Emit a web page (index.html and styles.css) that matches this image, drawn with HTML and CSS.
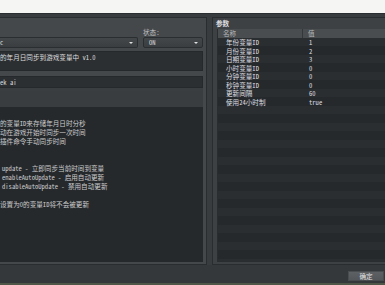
FILE: index.html
```html
<!DOCTYPE html>
<html lang="zh">
<head>
    <meta charset="UTF-8">
    <meta name="viewport" content="width=device-width, initial-scale=1.0">
    <title>插件设置</title>
    <link rel="stylesheet" href="styles.css">
</head>
<body>
<div class="screen">
    <div class="top-strip"></div>

    <div class="dialog">
        <div class="panels">

            <!-- general settings -->
            <section class="group general">
                <div class="label-row">
                    <span class="status-label">状态:</span>
                </div>
                <div class="select-row">
                    <div class="select name-select"><span>c</span><i class="arrow"></i></div>
                    <div class="select status-select"><span>ON</span><i class="arrow"></i></div>
                </div>
                <div class="box desc">的年月日同步到游戏变量中 v1.0</div>
                <div class="box author">ek ai</div>
                <div class="spacer"></div>
                <div class="box help">
                    <p>的变量ID来存储年月日时分秒</p>
                    <p>动在游戏开始时同步一次时间</p>
                    <p>插件命令手动同步时间</p>
                    <p>&nbsp;</p>
                    <p>&nbsp;</p>
                    <p class="cmd">update - 立即同步当前时间到变量</p>
                    <p class="cmd">enableAutoUpdate - 启用自动更新</p>
                    <p class="cmd">disableAutoUpdate - 禁用自动更新</p>
                    <p>&nbsp;</p>
                    <p>设置为0的变量ID将不会被更新</p>
                </div>
            </section>

            <!-- parameters -->
            <section class="group params">
                <div class="group-title">参数</div>
                <div class="table">
                    <div class="thead">
                        <span class="col-name">名称</span>
                        <span class="col-val">值</span>
                    </div>
                    <div class="tbody">
                        <div class="row"><span class="col-name">年份变量ID</span><span class="col-val">1</span></div>
                        <div class="row"><span class="col-name">月份变量ID</span><span class="col-val">2</span></div>
                        <div class="row"><span class="col-name">日期变量ID</span><span class="col-val">3</span></div>
                        <div class="row"><span class="col-name">小时变量ID</span><span class="col-val">0</span></div>
                        <div class="row"><span class="col-name">分钟变量ID</span><span class="col-val">0</span></div>
                        <div class="row"><span class="col-name">秒钟变量ID</span><span class="col-val">0</span></div>
                        <div class="row"><span class="col-name">更新间隔</span><span class="col-val">60</span></div>
                        <div class="row"><span class="col-name">使用24小时制</span><span class="col-val">true</span></div>
                    </div>
                </div>
            </section>

        </div>

        <div class="footer">
            <button class="ok-btn">确定</button>
        </div>
    </div>

    <div class="bottom-strip"></div>
</div>
</body>
</html>
```

FILE: styles.css
```css
* {
    margin: 0;
    padding: 0;
    box-sizing: border-box;
}

body {
    background: #35383b;
    font-family: "Noto Sans Mono CJK SC", "Noto Sans CJK SC", "Liberation Mono", monospace;
    font-size: 6.6px;
    color: #d4d5d6;
}

.screen {
    width: 385px;
    height: 285px;
    overflow: hidden;
    display: flex;
    flex-direction: column;
}

.top-strip {
    height: 13px;
    flex: none;
    background: #f5f6f3;
}

.dialog {
    height: 270px;
    flex: none;
    display: flex;
    flex-direction: column;
    background: #393c3f;
    border-top: 1px solid #2b2e31;
}

.panels {
    display: flex;
    gap: 5px;
    padding-top: 3px;
    height: 251px;
    flex: none;
}

.group {
    height: 248px;
    flex: none;
    border: 1px solid #2a2d30;
    background: #414447;
}

/* left side */
.general {
    width: 207px;
    border-left: none;
    padding: 10px 3px 2px 0;
    background: #45484b;
}

.label-row {
    height: 9px;
    line-height: 9px;
}

.status-label {
    margin-left: 143px;
    color: #c4c5c6;
}

.select-row {
    display: flex;
    gap: 5px;
    height: 11px;
}

.select {
    display: flex;
    align-items: center;
    justify-content: space-between;
    height: 11px;
    line-height: 9px;
    padding: 0 4px 0 5px;
    background: linear-gradient(#44474a, #3b3e41);
    border: 1px solid #2b2e31;
    border-radius: 2px;
    color: #dcdddd;
}

.name-select {
    width: 138px;
    padding-left: 0;
    border-left: none;
    border-radius: 0 2px 2px 0;
}

.status-select {
    width: 60px;
}

.arrow {
    width: 0;
    height: 0;
    border-left: 2px solid transparent;
    border-right: 2px solid transparent;
    border-top: 2px solid #e0e0e0;
}

.box {
    background: #2c2f32;
    border: 1px solid #26292b;
    border-left: none;
}

.desc {
    margin-top: 3px;
    height: 20px;
    padding-top: 1px;
    line-height: 9px;
    color: #dcdddd;
}

.author {
    margin-top: 5px;
    height: 12px;
    line-height: 10px;
    color: #dcdddd;
}

.spacer {
    height: 19px;
    border-top: 3px solid #3b3e41;
    background: #3a3d40;
}

.help {
    height: 155px;
    padding-top: 11px;
    background: #26292c;
    line-height: 9px;
    color: #cbcccd;
}

.help .cmd {
    padding-left: 2px;
}

/* right side */
.params {
    width: 180px;
    padding: 0 4px 2px 4px;
    border-right: none;
    background: #3e4144;
}

.group-title {
    height: 11px;
    line-height: 11px;
    margin-left: -1px;
    font-weight: bold;
    color: #dedfe0;
}

.table {
    height: 233px;
    display: flex;
    flex-direction: column;
    border: 1px solid #2a2d30;
    border-right: none;
    border-top: none;
}

.thead {
    display: flex;
    height: 9px;
    line-height: 9px;
    flex: none;
    background: #4a4d50;
    color: #b8b9ba;
}

.thead .col-name {
    width: 85px;
    padding-left: 5px;
    border-right: 1px solid #34373a;
}

.thead .col-val {
    padding-left: 5px;
}

.tbody {
    flex: 1;
    background: repeating-linear-gradient(#2b2e31 0 8.5px, #26292c 8.5px 17px);
}

.row {
    display: flex;
    height: 8.5px;
    line-height: 8.5px;
    color: #dedfe0;
}

.row .col-name {
    width: 86px;
    padding-left: 8px;
}

.row .col-val {
    padding-left: 5px;
}

/* footer */
.footer {
    flex: 1;
    display: flex;
    justify-content: flex-end;
    padding-top: 6px;
    background: #35383b;
}

.ok-btn {
    width: 36px;
    height: 10px;
    margin-right: 1px;
    border: 1px solid #4a4d50;
    background: linear-gradient(#5e6164, #54575a);
    color: #e2e2e2;
    font-family: "Noto Sans Mono CJK SC", "Noto Sans CJK SC", monospace;
    font-size: 6.6px;
    line-height: 8px;
}

.bottom-strip {
    height: 2px;
    flex: none;
    background: #4f5748;
}
```
